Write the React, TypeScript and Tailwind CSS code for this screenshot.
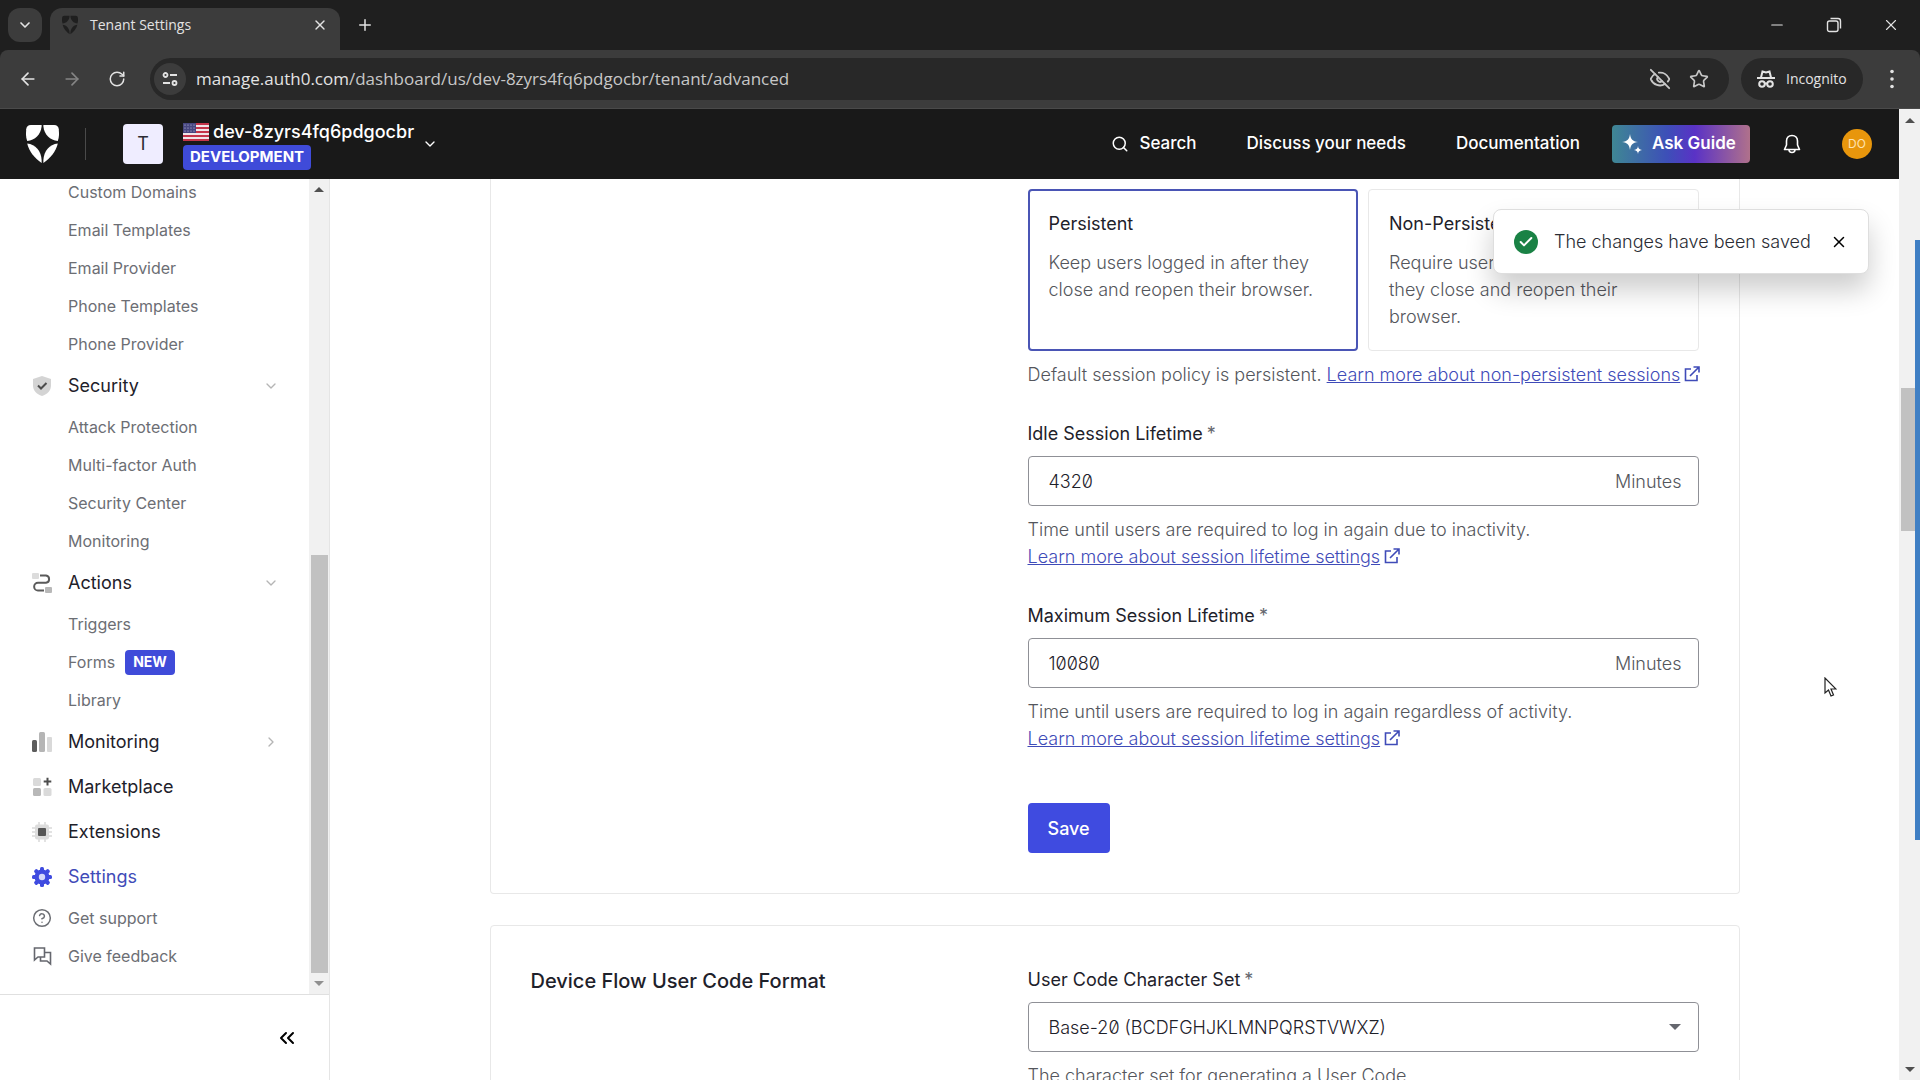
import React, { useState } from 'react';
import {
  ArrowLeft,
  ArrowRight,
  Check,
  ChevronDown,
  ChevronRight,
  ChevronsLeft,
  CircleHelp,
  EyeOff,
  Minus,
  Plus,
  RotateCw,
  Search,
  Star,
  X,
} from 'lucide-react';

interface IconProps {
  className?: string;
}

const ShieldLogo: React.FC<IconProps> = ({ className }) => (
  <svg className={className} viewBox="0 0 33 38" fill="currentColor">
    <path d="M15.6 0H4.8C2 0 .4 1.700 .2 4.300L0 8C-.1 11 .3 13.500 1.200 16C9 15.400 14.800 9.500 15.600 1.500Z" />
    <path d="M17.400 0H28.200C31 0 32.600 1.700 32.800 4.300L33 8C33.100 11 32.700 13.500 31.800 16C24 15.400 18.200 9.500 17.400 1.500Z" />
    <path d="M1.200 18.600C3.200 26.500 8.500 33.500 15.600 38V35C15.200 26 9.500 19.500 1.200 18.600Z" />
    <path d="M31.800 18.600C29.800 26.500 24.500 33.500 17.400 38V35C17.800 26 23.500 19.500 31.800 18.600Z" />
  </svg>
);

const FlagIcon: React.FC<IconProps> = ({ className }) => (
  <svg className={className} viewBox="0 0 26 18">
    <rect width="26" height="18" rx="1" fill="#f0e6e8" />
    {[0, 4, 8, 12, 16].map((y) => (
      <rect key={y} y={y} width="26" height="2" fill="#c4354a" />
    ))}
    <rect width="13" height="10" fill="#46467f" />
    {[2, 5, 8].map((y) =>
      [2, 5, 8, 11].map((x) => <circle key={`${x}-${y}`} cx={x} cy={y} r="0.6" fill="#c9c9e6" />)
    )}
  </svg>
);

const ExternalIcon: React.FC = () => (
  <svg className="mb-1 ml-1 inline h-4 w-4" viewBox="0 0 16 16" fill="none" stroke="currentColor" strokeWidth="1.6">
    <path d="M7 3H1.500V14.500H13V9" />
    <path d="M9.500 1H15V6.500M15 1L6 10" />
  </svg>
);

const SecurityIcon: React.FC = () => (
  <svg className="h-5 w-5" viewBox="0 0 20 20">
    <path d="M10 0L19 3V9.500C19 14.500 15.500 18.300 10 20C4.500 18.300 1 14.500 1 9.500V3Z" fill="#d4d4d4" />
    <path d="M6 9.500L9 12.500L14.500 7" fill="none" stroke="#4d4d4d" strokeWidth="2" />
  </svg>
);

const ActionsIcon: React.FC = () => (
  <svg className="h-5 w-5" viewBox="0 0 20 20">
    <rect width="7" height="6" rx="1" fill="#dcdcdc" />
    <rect x="13" y="14" width="7" height="6" rx="1" fill="#b8b8b8" />
    <path
      d="M8 2.500H14A3.700 3.700 0 0 1 14 9.800H6A3.800 3.800 0 0 0 6 17.500H12"
      fill="none"
      stroke="#5a5a5a"
      strokeWidth="2"
    />
  </svg>
);

const MonitoringIcon: React.FC = () => (
  <svg className="h-5 w-5" viewBox="0 0 20 20">
    <rect y="8" width="5" height="12" rx="1.500" fill="#5c5c5c" />
    <rect x="7" width="6" height="20" rx="1.500" fill="#b5b5b5" />
    <rect x="15" y="5" width="5" height="15" rx="1" fill="#d9d9d9" />
  </svg>
);

const MarketplaceIcon: React.FC = () => (
  <svg className="h-5 w-5" viewBox="0 0 20 20">
    <rect x="1" y="1" width="8" height="8" rx="1.500" fill="#dadada" />
    <rect x="1" y="11" width="8" height="8" rx="1.500" fill="#b8b8b8" />
    <rect x="11.500" y="11" width="8" height="8" rx="1.500" fill="#dadada" />
    <path d="M15.500 .8V8.400M11.700 4.600H19.300" stroke="#4d4d4d" strokeWidth="2" />
  </svg>
);

const ExtensionsIcon: React.FC = () => (
  <svg className="h-5 w-5" viewBox="0 0 20 20">
    <path d="M7 0V20M13 0V20M0 6H20M0 14H20M0 10H20" stroke="#d9d9d9" strokeWidth="1.500" />
    <rect x="3" y="2.500" width="14" height="15" rx="2" fill="#dcdcdc" />
    <rect x="6" y="6" width="8" height="8" rx="1" fill="#555555" />
  </svg>
);

const SettingsIcon: React.FC = () => (
  <svg className="h-5 w-5" viewBox="0 0 20 20">
    <g fill="#3f4be0">
      {[0, 45, 90, 135].map((angle) => (
        <rect key={angle} x="8" width="4" height="20" rx="1.500" transform={`rotate(${angle} 10 10)`} />
      ))}
      <circle cx="10" cy="10" r="7.500" />
    </g>
    <circle cx="10" cy="10" r="3.200" fill="#d5d8fa" />
  </svg>
);

const FeedbackIcon: React.FC = () => (
  <svg className="h-5 w-5 text-[#65676e]" viewBox="0 0 20 20" fill="none" stroke="currentColor" strokeWidth="1.600">
    <path d="M2.500 2H12.500V11H6L2.500 14Z" />
    <path d="M12.500 6.500H18.500V18L15 15H8.500V11" />
  </svg>
);

const IncognitoIcon: React.FC = () => (
  <svg className="h-5 w-5" viewBox="0 0 20 20" fill="none" stroke="currentColor" strokeWidth="2">
    <path d="M5 8.500L6.500 2.500L10 3.500L13.500 2.500L15 8.500M1 9H19" />
    <circle cx="6" cy="15" r="2.800" />
    <circle cx="14" cy="15" r="2.800" />
    <path d="M8.800 14.500H11.200" />
  </svg>
);

const SiteInfoIcon: React.FC = () => (
  <svg className="h-4 w-4" viewBox="0 0 16 16" fill="none" stroke="currentColor" strokeWidth="1.800">
    <circle cx="3.500" cy="4" r="2" />
    <path d="M8 4H15M1 12H8" />
    <circle cx="12.500" cy="12" r="2" />
  </svg>
);

const SparkleIcon: React.FC = () => (
  <svg className="h-5 w-5" viewBox="0 0 20 20" fill="currentColor">
    <path d="M8 0C8.800 5.500 10.500 7.200 16 8C10.500 8.800 8.800 10.500 8 16C7.200 10.500 5.500 8.800 0 8C5.500 7.200 7.200 5.500 8 0Z" />
    <path d="M16 12C16.400 14.700 17.300 15.600 20 16C17.300 16.400 16.400 17.300 16 20C15.600 17.300 14.700 16.400 12 16C14.700 15.600 15.600 14.700 16 12Z" />
  </svg>
);

const BellIcon: React.FC = () => (
  <svg className="h-5 w-5" viewBox="0 0 20 20" fill="none" stroke="currentColor" strokeWidth="1.600" strokeLinejoin="round">
    <path d="M10 1.500C6.500 1.500 4.500 4 4.500 7V11L2.500 15.500H17.500L15.500 11V7C15.500 4 13.500 1.500 10 1.500Z" />
    <path d="M7 15.500A3 3 0 0 0 13 15.500" />
  </svg>
);

interface NavSection {
  label: string;
  icon: React.ReactNode;
  state?: 'open' | 'closed';
  active?: boolean;
  children?: { label: string; isNew?: boolean }[];
}

const SECTIONS: NavSection[] = [
  {
    label: 'Security',
    icon: <SecurityIcon />,
    state: 'open',
    children: [
      { label: 'Attack Protection' },
      { label: 'Multi-factor Auth' },
      { label: 'Security Center' },
      { label: 'Monitoring' },
    ],
  },
  {
    label: 'Actions',
    icon: <ActionsIcon />,
    state: 'open',
    children: [{ label: 'Triggers' }, { label: 'Forms', isNew: true }, { label: 'Library' }],
  },
  { label: 'Monitoring', icon: <MonitoringIcon />, state: 'closed' },
  { label: 'Marketplace', icon: <MarketplaceIcon /> },
  { label: 'Extensions', icon: <ExtensionsIcon /> },
  { label: 'Settings', icon: <SettingsIcon />, active: true },
];

const BRANDING = ['Custom Domains', 'Email Templates', 'Email Provider', 'Phone Templates', 'Phone Provider'];

const BrowserChrome: React.FC = () => (
  <div className="shrink-0 bg-[#1f1f1f] font-['Open_Sans',sans-serif] text-[#e3e3e3]">
    <div className="flex h-[50px] items-end">
      <button aria-label="Search tabs" className="mb-2 ml-2 flex h-[34px] w-[34px] items-center justify-center rounded-xl bg-[#3c3c3c]">
        <ChevronDown className="h-4 w-4" strokeWidth={2.5} />
      </button>
      <div className="ml-2 flex h-[42px] w-[290px] items-center rounded-t-xl bg-[#3c3c3c] pr-3 pb-2 pl-3">
        <ShieldLogo className="h-5 w-4 text-[#1f1f1f]" />
        <span className="ml-3 flex-1 text-sm">Tenant Settings</span>
        <button aria-label="Close tab">
          <X className="h-4 w-4" />
        </button>
      </div>
      <button aria-label="New tab" className="mb-4 ml-4">
        <Plus className="h-[18px] w-[18px]" />
      </button>
      <div className="mb-4 ml-auto flex items-center gap-10 pr-5">
        <button aria-label="Minimize">
          <Minus className="h-[18px] w-[18px]" strokeWidth={1.5} />
        </button>
        <button aria-label="Restore">
          <svg className="h-4 w-4" viewBox="0 0 16 16" fill="none" stroke="currentColor" strokeWidth="1.400">
            <rect x="1.500" y="4" width="10.500" height="10.500" rx="2" />
            <path d="M4.500 1.500H12A2.500 2.500 0 0 1 14.500 4V11.500" />
          </svg>
        </button>
        <button aria-label="Close">
          <X className="h-[18px] w-[18px]" strokeWidth={1.5} />
        </button>
      </div>
    </div>
    <div className="flex h-[59px] items-center rounded-t-lg border-b border-[#4a4a4a] bg-[#3c3c3c] pr-[26px] pl-[18px]">
      <button aria-label="Back">
        <ArrowLeft className="h-5 w-5" />
      </button>
      <button aria-label="Forward" className="ml-6 text-[#858585]">
        <ArrowRight className="h-5 w-5" />
      </button>
      <button aria-label="Reload" className="mr-6 ml-[26px]">
        <RotateCw className="h-[18px] w-[18px]" />
      </button>
      <div className="flex h-[42px] flex-1 items-center rounded-full bg-[#282828] pr-5 pl-1">
        <button aria-label="Site information" className="flex h-8 w-8 items-center justify-center rounded-full bg-[#3c3c3c]">
          <SiteInfoIcon />
        </button>
        <p className="ml-[10px] flex-1 text-[17px]">
          manage.auth0.com<span className="text-[#c7c7c7]">/dashboard/us/dev-8zyrs4fq6pdgocbr/tenant/advanced</span>
        </p>
        <EyeOff className="h-[22px] w-[22px] text-[#c7c7c7]" />
        <Star className="ml-[18px] h-5 w-5 text-[#c7c7c7]" />
      </div>
      <div className="ml-3 flex h-[42px] w-[122px] items-center gap-[10px] rounded-full bg-[#282828] pl-[15px] text-sm">
        <IncognitoIcon />
        <span>Incognito</span>
      </div>
      <button aria-label="Menu" className="ml-[27px]">
        <svg className="h-5 w-1" viewBox="0 0 4 20" fill="currentColor">
          <circle cx="2" cy="2.500" r="1.800" />
          <circle cx="2" cy="10" r="1.800" />
          <circle cx="2" cy="17.500" r="1.800" />
        </svg>
      </button>
    </div>
  </div>
);

const Header: React.FC = () => (
  <header className="flex h-[70px] shrink-0 items-center bg-[#191919] pr-[27px] pl-[26px] text-[17px] font-medium text-white">
    <ShieldLogo className="h-[38px] w-[33px]" />
    <div className="ml-[26px] h-8 w-px bg-[#4a4a4a]" />
    <div className="ml-[37px] flex h-10 w-10 items-center justify-center rounded-sm bg-[#efedff] text-lg font-normal text-[#2b2b33]">
      T
    </div>
    <button className="ml-5 flex items-center gap-2">
      <span className="flex flex-col items-start">
        <span className="flex items-center gap-1 text-lg leading-[26px]">
          <FlagIcon className="h-[18px] w-[26px]" />
          dev-8zyrs4fq6pdgocbr
        </span>
        <span className="flex h-[25px] items-center rounded bg-[#3f4bd9] px-[7px] text-[15px] font-bold">
          DEVELOPMENT
        </span>
      </span>
      <ChevronDown className="h-4 w-4" />
    </button>
    <nav className="ml-auto flex items-center">
      <button className="flex items-center gap-[10px]">
        <Search className="h-[18px] w-[18px]" />
        Search
      </button>
      <a href="#discuss" className="ml-[50px]">Discuss your needs</a>
      <a href="#docs" className="ml-[50px]">Documentation</a>
      <button className="ml-8 flex h-[38px] w-[138px] items-center gap-[10px] rounded bg-[linear-gradient(90deg,#3f8794_0%,#3d4fb8_40%,#5a32c6_60%,#b0718b_100%)] pl-[10px] font-semibold">
        <SparkleIcon />
        Ask Guide
      </button>
    </nav>
    <button aria-label="Notifications" className="ml-8">
      <BellIcon />
    </button>
    <button className="ml-10 flex h-[30px] w-[30px] items-center justify-center rounded-full bg-[#e8960c] text-xs font-normal text-[#ffe3b0]">
      DO
    </button>
  </header>
);

const ScrollArrow: React.FC<IconProps> = ({ className }) => (
  <svg className={`h-[5px] w-[10px] shrink-0 ${className}`} viewBox="0 0 10 5" fill="#505050">
    <path d="M5 0L10 5H0Z" />
  </svg>
);

const Sidebar: React.FC = () => (
  <aside className="flex w-[330px] shrink-0 flex-col border-r border-[#e5e5e5]">
    <div className="flex min-h-0 flex-1 border-b border-[#e0e0e0]">
      <nav className="flex flex-1 flex-col justify-end overflow-hidden pr-[30px] pb-[19px] pl-8 text-base text-[#6c6e74]">
        {BRANDING.map((label) => (
          <a key={label} href="#branding" className="flex h-[38px] shrink-0 items-center pl-9">
            {label}
          </a>
        ))}
        {SECTIONS.map((section) => (
          <div key={section.label} className="shrink-0">
            <a
              href="#section"
              className={`flex h-[45px] items-center gap-4 text-lg ${section.active ? 'text-[#3f4bb8]' : 'text-[#1e212a]'}`}
            >
              {section.icon}
              <span className="flex-1">{section.label}</span>
              {section.state === 'open' && <ChevronDown className="h-4 w-4 text-[#b5b5b5]" />}
              {section.state === 'closed' && <ChevronRight className="h-4 w-4 text-[#b5b5b5]" />}
            </a>
            {section.children?.map((child) => (
              <a key={child.label} href="#item" className="flex h-[38px] items-center gap-[10px] pl-9">
                {child.label}
                {child.isNew && (
                  <span className="flex h-[25px] items-center rounded bg-[#3f4bd9] px-2 text-sm font-bold text-white">
                    NEW
                  </span>
                )}
              </a>
            ))}
          </div>
        ))}
        <a href="#support" className="flex h-[38px] shrink-0 items-center gap-4">
          <CircleHelp className="h-5 w-5" strokeWidth={1.8} />
          Get support
        </a>
        <a href="#feedback" className="flex h-[38px] shrink-0 items-center gap-4">
          <FeedbackIcon />
          Give feedback
        </a>
      </nav>
      <div className="flex w-5 flex-col items-center bg-[#f1f1f1]">
        <ScrollArrow className="my-2" />
        <div className="flex-[355]" />
        <div className="w-[17px] flex-[419] bg-[#c1c1c1]" />
        <ScrollArrow className="my-2 rotate-180 opacity-60" />
      </div>
    </div>
    <div className="flex h-[85px] shrink-0 items-center justify-end pr-[30px]">
      <button aria-label="Collapse sidebar">
        <ChevronsLeft className="h-6 w-6 text-black" />
      </button>
    </div>
  </aside>
);

const LearnMore: React.FC<{ children: React.ReactNode }> = ({ children }) => (
  <a href="#learn" className="whitespace-nowrap text-[#3f4bb8]">
    <span className="underline">{children}</span>
    <ExternalIcon />
  </a>
);

interface MinutesFieldProps {
  id: string;
  label: string;
  value: string;
  hint: string;
}

const MinutesField: React.FC<MinutesFieldProps> = ({ id, label, value, hint }) => {
  const [minutes, setMinutes] = useState<string>(value);

  return (
    <div className="mt-8">
      <label htmlFor={id} className="block font-normal">
        {label}
        <span className="ml-1 text-[#65676e]">*</span>
      </label>
      <div className="mt-[9px] flex h-[50px] items-center rounded border border-[#8f9096] pr-4 pl-5">
        <input
          id={id}
          value={minutes}
          onChange={(e) => setMinutes(e.target.value)}
          className="min-w-0 flex-1 slashed-zero outline-none"
        />
        <span className="text-[#54565c]">Minutes</span>
      </div>
      <p className="mt-[10px] text-[#54565c]">
        {hint}
        <br />
        <LearnMore>Learn more about session lifetime settings</LearnMore>
      </p>
    </div>
  );
};

const POLICIES = [
  { id: 'persistent', title: 'Persistent', text: 'Keep users logged in after they close and reopen their browser.' },
  { id: 'non-persistent', title: 'Non-Persistent', text: 'Require users to log in again after they close and reopen their browser.' },
];

const SettingsPage: React.FC = () => {
  const [policy, setPolicy] = useState<string>('persistent');

  return (
    <main className="min-w-0 flex-1 overflow-hidden px-10 text-lg leading-[27px] font-light text-[#1e212a]">
      <div className="mx-auto max-w-[1250px]">
        <section className="grid grid-cols-[1fr_671px] rounded-b border-x border-b border-[#e8e8e8] px-10 pt-[10px] pb-10">
          <form className="col-start-2">
            <fieldset className="grid grid-cols-2 gap-[10px]">
              {POLICIES.map(({ id, title, text }) => (
                <label
                  key={id}
                  className={`rounded ${policy === id ? 'border-2 border-[#4a55b5] p-[19px]' : 'border border-[#e8e8e8] p-5'}`}
                >
                  <input
                    type="radio"
                    name="policy"
                    className="sr-only"
                    checked={policy === id}
                    onChange={() => setPolicy(id)}
                  />
                  <span className="block font-normal">{title}</span>
                  <span className="mt-3 block text-[#54565c]">{text}</span>
                </label>
              ))}
            </fieldset>
            <p className="mt-[10px] whitespace-nowrap text-[#54565c]">
              Default session policy is persistent. <LearnMore>Learn more about non-persistent sessions</LearnMore>
            </p>
            <MinutesField
              id="idle"
              label="Idle Session Lifetime"
              value="4320"
              hint="Time until users are required to log in again due to inactivity."
            />
            <MinutesField
              id="maximum"
              label="Maximum Session Lifetime"
              value="10080"
              hint="Time until users are required to log in again regardless of activity."
            />
            <button type="button" className="mt-[51px] h-[50px] rounded bg-[#3f4be0] px-5 font-medium text-white">
              Save
            </button>
          </form>
        </section>
        <section className="mt-[31px] grid grid-cols-[1fr_671px] rounded border border-[#e8e8e8] px-10 pt-10 pb-10">
          <h2 className="text-xl leading-[30px] font-medium">Device Flow User Code Format</h2>
          <div>
            <label htmlFor="charset" className="block font-normal">
              User Code Character Set
              <span className="ml-1 text-[#65676e]">*</span>
            </label>
            <div className="relative mt-[9px]">
              <select
                id="charset"
                className="h-[50px] w-full appearance-none rounded border border-[#8f9096] bg-white px-5 slashed-zero"
              >
                <option>Base-20 (BCDFGHJKLMNPQRSTVWXZ)</option>
                <option>Digits</option>
              </select>
              <svg className="absolute top-[22px] right-[18px] h-[6px] w-3" viewBox="0 0 12 6" fill="#65676e">
                <path d="M0 0H12L6 6Z" />
              </svg>
            </div>
            <p className="mt-[10px] text-[#54565c]">The character set for generating a User Code.</p>
          </div>
        </section>
      </div>
    </main>
  );
};

const Toast: React.FC = () => (
  <div
    role="status"
    className="absolute top-[100px] right-[30px] flex h-[65px] w-[376px] items-center rounded-lg border border-[#dedede] bg-white px-5 text-lg font-light text-[#2a2c34] shadow-[0_16px_28px_rgba(0,0,0,0.2)]"
  >
    <span className="mr-4 flex h-6 w-6 items-center justify-center rounded-full bg-[#1a8245] text-white">
      <Check className="h-4 w-4" strokeWidth={3} />
    </span>
    <span className="flex-1 whitespace-nowrap">The changes have been saved</span>
    <button aria-label="Dismiss">
      <X className="h-[18px] w-[18px] text-black" />
    </button>
  </div>
);

const App: React.FC = () => (
  <div className="flex h-screen flex-col overflow-hidden bg-white font-['Inter',sans-serif]">
    <BrowserChrome />
    <div className="relative flex min-h-0 flex-1">
      <div className="relative flex min-w-0 flex-1 flex-col">
        <Header />
        <div className="flex min-h-0 flex-1">
          <Sidebar />
          <SettingsPage />
        </div>
        <Toast />
        <svg className="absolute top-[568px] right-[62px] h-5 w-[13px]" viewBox="0 0 13 20">
          <path d="M1 1V16L4.500 13L7 19L9.500 18L7 12H12Z" fill="white" stroke="#222222" strokeWidth="1.200" />
        </svg>
      </div>
      <div className="flex w-[21px] flex-col items-center bg-[#f1f1f1]">
        <ScrollArrow className="my-[9px]" />
        <div className="flex-[256]" />
        <div className="w-[17px] flex-[143] bg-[#c1c1c1]" />
        <div className="flex-[527]" />
        <ScrollArrow className="my-2 rotate-180" />
      </div>
      {/* edge of the window behind the browser */}
      <div className="absolute top-[131px] right-0 h-[600px] w-[5px] bg-[#3f7fc4]" />
    </div>
  </div>
);

export default App;
